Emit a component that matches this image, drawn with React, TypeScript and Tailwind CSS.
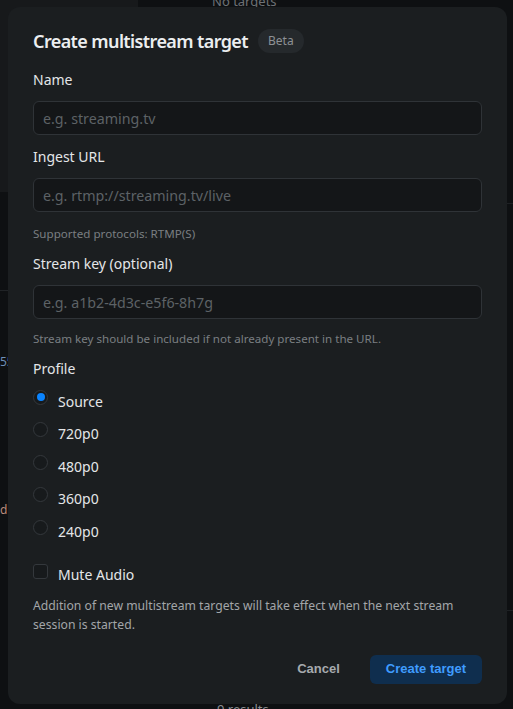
import React from "react";

const font = { fontFamily: '"Noto Sans", "Open Sans", sans-serif' };

function Field({ label, placeholder }: { label: string; placeholder: string }) {
  return (
    <div className="flex flex-col">
      <label className="h-[20px] leading-[20px] text-[14px] text-[#e4e6e8]">{label}</label>
      <input
        className="mt-[11px] h-[34px] w-full rounded-[6px] border border-[#2f3337] bg-[#141618] px-[9px] text-[14.25px] text-[#e4e6e8] placeholder:text-[#5d6266] outline-none"
        placeholder={placeholder}
        style={font}
      />
    </div>
  );
}

function Radio({ label, checked }: { label: string; checked?: boolean }) {
  return (
    <div className="flex h-[32.5px] items-center">
      <span className="mb-[8px] flex h-[15px] w-[15px] items-center justify-center rounded-full border border-[#34383c] bg-[#171a1c]">
        {checked && <span className="h-[8px] w-[8px] rounded-full bg-[#0a84ff]" />}
      </span>
      <span className="ml-[10px] text-[14px] text-[#e4e6e8]">{label}</span>
    </div>
  );
}

export default function App() {
  return (
    <div className="relative h-[709px] w-[513px] overflow-hidden bg-[#0e1012]" style={font}>
      {/* page behind the modal */}
      <div className="flex h-full">
        <div className="flex w-[138px] flex-col">
          <div className="h-[192px] bg-[#17191b]" />
          <div className="h-[99px] border-b border-[#202326]" />
          <div className="pt-[62px] text-[12px] text-[#6f8fb8]">55</div>
          <div className="pt-[130px] text-[12px] text-[#b98a7a]">d</div>
        </div>
        <div className="flex flex-1 flex-col">
          <div className="flex h-[8px] items-end pl-[74px]">
            <span className="text-[13px] leading-[13px] text-[#6d7175]">No targets</span>
          </div>
          <div className="mt-[195px] border-b border-[#1e2124]" />
          <div className="mt-[406px] border-b border-[#1e2124]" />
          <div className="mt-[90px] pl-[79px] text-[13px] leading-[16px] text-[#8a8e92]">9 results</div>
        </div>
      </div>

      {/* modal */}
      <div className="absolute left-[8px] top-[7px] flex w-[499px] flex-col rounded-[12px] bg-[#1b1e20] px-[25px] pb-[20px] pt-[20px]">
        <div className="flex h-[28px] items-center">
          <h2 className="text-[18px] font-semibold tracking-[-0.6px] text-[#eceef0]">Create multistream target</h2>
          <span className="ml-[10px] flex h-[24px] items-center rounded-full bg-[#25292c] px-[10px] text-[12px] text-[#8d9195]">
            Beta
          </span>
        </div>

        <div className="mt-[15px]">
          <Field label="Name" placeholder="e.g. streaming.tv" />
        </div>
        <div className="mt-[12px]">
          <Field label="Ingest URL" placeholder="e.g. rtmp://streaming.tv/live" />
        </div>
        <div className="mt-[14px] h-[16px] text-[11.6px] leading-[16px] text-[#7a7e82]">Supported protocols: RTMP(S)</div>
        <div className="mt-[12px]">
          <Field label="Stream key (optional)" placeholder="e.g. a1b2-4d3c-e5f6-8h7g" />
        </div>
        <div className="mt-[12px] h-[16px] text-[11.6px] leading-[16px] text-[#7a7e82]">
          Stream key should be included if not already present in the URL.
        </div>

        <div className="mt-[12px] h-[20px] text-[14px] leading-[20px] text-[#e4e6e8]">Profile</div>
        <div className="mt-[6px] flex flex-col">
          <Radio label="Source" checked />
          <Radio label="720p0" />
          <Radio label="480p0" />
          <Radio label="360p0" />
          <Radio label="240p0" />
        </div>

        <div className="mt-[11px] flex h-[32px] items-center">
          <span className="mb-[6px] h-[15px] w-[15px] rounded-[3px] border border-[#34383c] bg-[#171a1c]" />
          <span className="ml-[10px] text-[14px] text-[#e4e6e8]">Mute Audio</span>
        </div>

        <p className="mt-[5px] text-[12.2px] leading-[19px] text-[#a3a6a9]">
          Addition of new multistream targets will take effect when the next stream session is started.
        </p>

        <div className="mt-[21px] flex items-center justify-end" style={{ fontFamily: '"Liberation Sans", Arial, sans-serif' }}>
          <button className="mr-[30px] text-[13px] font-bold text-[#a6aaae]">Cancel</button>
          <button className="h-[29px] rounded-[6px] bg-[#0f2e4e] px-[16px] text-[13px] font-bold text-[#3f9cff]">
            Create target
          </button>
        </div>
      </div>
    </div>
  );
}
